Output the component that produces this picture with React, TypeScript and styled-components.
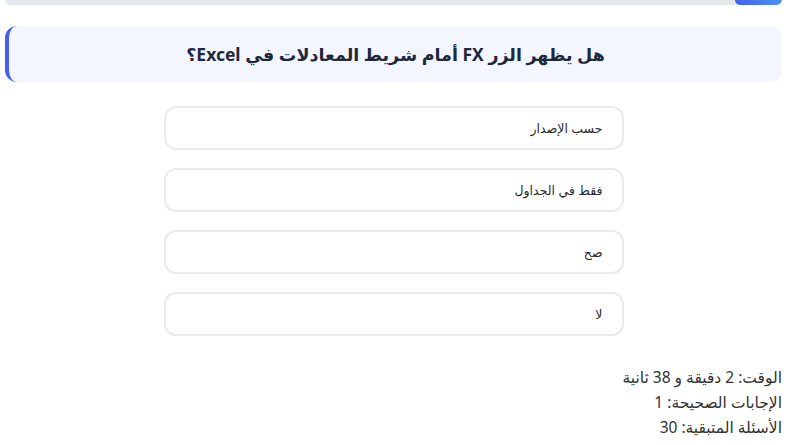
import styled, { createGlobalStyle } from 'styled-components';

const Global = createGlobalStyle`
  html, body { margin: 0; padding: 0; background: #ffffff; }
  body {
    font-family: "Noto Sans", "DejaVu Sans", "Liberation Sans", sans-serif;
    color: #1f2937;
  }
`;

const Page = styled.div`
  direction: rtl;
  padding: 0 18px 0 5px;
`;

const Track = styled.div`
  height: 5px;
  background: #e5e9ee;
  border-radius: 0 0 6px 6px;
  overflow: hidden;
  display: flex;
`;

const Fill = styled.div`
  height: 100%;
  border-radius: 0 0 6px 6px;
  background: linear-gradient(to left, #4a94f2, #4361ee);
`;

const QuestionCard = styled.div`
  margin-top: 21px;
  height: 56px;
  box-sizing: border-box;
  display: flex;
  align-items: center;
  justify-content: center;
  background: #f3f6fe;
  border-left: 4px solid #4361ee;
  border-radius: 12px;
`;

const QuestionText = styled.h2`
  margin: 0;
  font-size: 17.5px;
  font-weight: 700;
  color: #1e293b;
`;

const Options = styled.div`
  width: 460px;
  margin: 24px auto 0;
  display: flex;
  flex-direction: column;
  gap: 18px;
`;

const Option = styled.button`
  direction: rtl;
  height: 44px;
  box-sizing: border-box;
  padding: 0 19px;
  text-align: right;
  background: #ffffff;
  border: 2px solid #e8ebef;
  border-radius: 12px;
  font-family: "Liberation Sans", "DejaVu Sans", sans-serif;
  font-size: 12.5px;
  color: #2a2a2a;
  cursor: pointer;
`;

const Stats = styled.div`
  margin-top: 29px;
  font-size: 15.5px;
  line-height: 25px;
  color: #333333;
`;

const options = ['حسب الإصدار', 'فقط في الجداول', 'صح', 'لا'];

export default function App() {
  const progress = 6;
  return (
    <Page>
      <Global />
      <Track>
        <Fill style={{ width: `${progress}%` }} />
      </Track>
      <QuestionCard>
        <QuestionText>هل يظهر الزر FX أمام شريط المعادلات في Excel؟</QuestionText>
      </QuestionCard>
      <Options>
        {options.map((o) => (
          <Option key={o} type="button">
            {o}
          </Option>
        ))}
      </Options>
      <Stats>
        <div>الوقت: 2 دقيقة و 38 ثانية</div>
        <div>الإجابات الصحيحة: 1</div>
        <div>الأسئلة المتبقية: 30</div>
      </Stats>
    </Page>
  );
}
